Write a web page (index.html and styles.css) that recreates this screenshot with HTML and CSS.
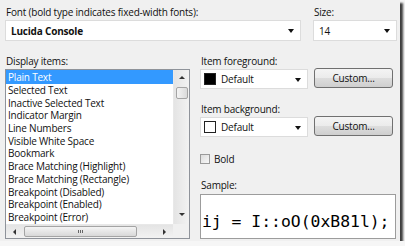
FILE: index.html
```html
<!DOCTYPE html>
<html>
<head>
	<meta charset="utf-8">
	<title>Fonts and Colors</title>
	<link rel="stylesheet" href="styles.css">
</head>
<body>
	<div class="dialog">
		<div class="top">
			<div class="field">
				<label class="lbl">Font (bold type indicates fixed-width fonts):</label>
				<div class="combo"><span class="val strong">Lucida Console</span><span class="arrow"></span></div>
			</div>
			<div class="field">
				<label class="lbl">Size:</label>
				<div class="combo"><span class="val">14</span><span class="arrow"></span></div>
			</div>
		</div>

		<div class="main">
			<div class="left">
				<label class="lbl">Display items:</label>
				<div class="list">
					<div class="list-body">
						<ul class="items">
							<li class="sel">Plain Text</li>
							<li>Selected Text</li>
							<li>Inactive Selected Text</li>
							<li>Indicator Margin</li>
							<li>Line Numbers</li>
							<li>Visible White Space</li>
							<li>Bookmark</li>
							<li>Brace Matching (Highlight)</li>
							<li>Brace Matching (Rectangle)</li>
							<li>Breakpoint (Disabled)</li>
							<li>Breakpoint (Enabled)</li>
							<li>Breakpoint (Error)</li>
						</ul>
						<div class="vscroll">
							<span class="tri up"></span>
							<span class="vthumb"></span>
							<span class="tri down"></span>
						</div>
					</div>
					<div class="hrow">
						<div class="hscroll">
							<span class="tri lft"></span>
							<span class="hthumb"><span class="grip"></span></span>
							<span class="tri rgt"></span>
						</div>
						<div class="corner"></div>
					</div>
				</div>
			</div>

			<div class="right">
				<label class="lbl">Item foreground:</label>
				<div class="pick">
					<div class="combo small"><span class="swatch black"></span><span class="val">Default</span><span class="arrow"></span></div>
					<button type="button" class="btn">Custom...</button>
				</div>

				<label class="lbl gap">Item background:</label>
				<div class="pick">
					<div class="combo small"><span class="swatch white"></span><span class="val">Default</span><span class="arrow"></span></div>
					<button type="button" class="btn">Custom...</button>
				</div>

				<div class="check"><span class="box"></span><span>Bold</span></div>

				<label class="lbl">Sample:</label>
				<div class="sample">ij = I::oO(0xB81l);</div>
			</div>
		</div>
	</div>
</body>
</html>
```

FILE: styles.css
```css
html, body {
	margin: 0;
	padding: 0;
	background: #f6f6f6;
}
body {
	font-family: "Open Sans", "Noto Sans", sans-serif;
	font-size: 10px;
	letter-spacing: -0.2px;
	color: #111;
}
.dialog {
	width: 400px;
	height: 241px;
	box-sizing: border-box;
	padding: 4px 0 0 5px;
	background: #f0f0f0;
	box-shadow: 3px 3px 2px rgba(0, 0, 0, 0.75);
}
.lbl {
	display: block;
	height: 16px;
	line-height: 16px;
	padding-left: 1px;
}
.top {
	display: grid;
	grid-template-columns: 296px 84px;
	column-gap: 12px;
}
.combo {
	height: 21px;
	box-sizing: border-box;
	border: 1px solid #dcdcdc;
	background: #fff;
	display: flex;
	align-items: center;
	padding: 0 6px 0 5px;
}
.combo .val {
	flex: 1;
}
.strong {
	font-weight: bold;
}
.arrow {
	width: 0;
	height: 0;
	border-left: 3.5px solid transparent;
	border-right: 3.5px solid transparent;
	border-top: 4px solid #111;
	border-bottom: 0;
	margin-top: 1px;
}

.main {
	margin-top: 12px;
	display: grid;
	grid-template-columns: 185px 197px;
	column-gap: 10px;
}

/* list box */
.list {
	height: 170px;
	box-sizing: border-box;
	border: 1px solid #8f939a;
	background: #fff;
	display: flex;
	flex-direction: column;
}
.list-body {
	height: 154px;
	display: flex;
	overflow: hidden;
}
.items {
	flex: 1;
	margin: 0;
	padding: 0;
	list-style: none;
}
.items li {
	height: 12.7px;
	line-height: 12.7px;
	padding-left: 2px;
	white-space: nowrap;
}
.items li.sel {
	background: #3399ff;
	color: #fff;
	height: 14px;
	line-height: 14px;
}
.vscroll {
	width: 15px;
	background: linear-gradient(to right, #e4e4e4, #f2f2f2);
	border-left: 1px solid #e8e8e8;
	display: flex;
	flex-direction: column;
	align-items: center;
}
.tri {
	width: 0;
	height: 0;
	display: block;
}
.tri.up {
	margin-top: 6px;
	border-left: 3px solid transparent;
	border-right: 3px solid transparent;
	border-bottom: 3px solid #333;
}
.tri.down {
	margin-top: auto;
	margin-bottom: 8px;
	border-left: 3px solid transparent;
	border-right: 3px solid transparent;
	border-top: 3px solid #333;
}
.vthumb {
	margin-top: 8px;
	width: 12px;
	height: 12px;
	box-sizing: border-box;
	border: 1px solid #a4a4a4;
	border-radius: 2px;
	background: linear-gradient(to right, #f4f4f4, #dadada);
}
.hrow {
	height: 14px;
	display: flex;
}
.hscroll {
	flex: 1;
	background: linear-gradient(to bottom, #e4e4e4, #f2f2f2);
	border-top: 1px solid #e8e8e8;
	display: flex;
	align-items: center;
	padding: 0 7px;
}
.tri.lft {
	border-top: 3px solid transparent;
	border-bottom: 3px solid transparent;
	border-right: 3px solid #333;
}
.tri.rgt {
	margin-left: auto;
	border-top: 3px solid transparent;
	border-bottom: 3px solid transparent;
	border-left: 3px solid #333;
}
.hthumb {
	margin-left: 8px;
	width: 113px;
	height: 11px;
	box-sizing: border-box;
	border: 1px solid #a4a4a4;
	border-radius: 2px;
	background: linear-gradient(to bottom, #f4f4f4, #d8d8d8);
	display: flex;
	align-items: center;
	justify-content: center;
}
.grip {
	width: 5px;
	height: 3px;
	background: repeating-linear-gradient(to right, #666 0 1px, transparent 1px 2px);
}
.corner {
	width: 16px;
	background: #f0f0f0;
}

/* right column */
.pick {
	display: flex;
	align-items: flex-start;
	column-gap: 6px;
}
.combo.small {
	width: 108px;
	height: 20px;
	padding-left: 3px;
}
.swatch {
	width: 12px;
	height: 12px;
	box-sizing: border-box;
	margin-right: 5px;
	border: 1px solid #222;
}
.swatch.black {
	background: #000;
}
.swatch.white {
	background: #fff;
}
.btn {
	width: 79px;
	height: 20px;
	margin-top: -1px;
	padding: 0;
	font: inherit;
	letter-spacing: inherit;
	color: #111;
	border: 1px solid #707070;
	border-radius: 3px;
	background: linear-gradient(to bottom, #f4f4f4 0%, #ebebeb 50%, #dddddd 51%, #cfcfcf 100%);
}
.lbl.gap {
	margin-top: 12px;
}
.check {
	margin-top: 16px;
	height: 11px;
	display: flex;
	align-items: center;
	column-gap: 4px;
	margin-bottom: 13px;
}
.check .box {
	width: 10px;
	height: 10px;
	box-sizing: border-box;
	border: 1px solid #9a9a9a;
	background: linear-gradient(135deg, #dcdcdc, #f8f8f8);
}
.sample {
	margin-top: 1px;
	width: 196px;
	height: 45px;
	box-sizing: border-box;
	border: 1px solid #9c9c9c;
	background: #fff;
	padding: 17px 0 0 1px;
	line-height: 20px;
	font-family: "DejaVu Sans Mono", monospace;
	font-size: 16.4px;
	letter-spacing: 0;
	color: #000;
	white-space: nowrap;
}
```
